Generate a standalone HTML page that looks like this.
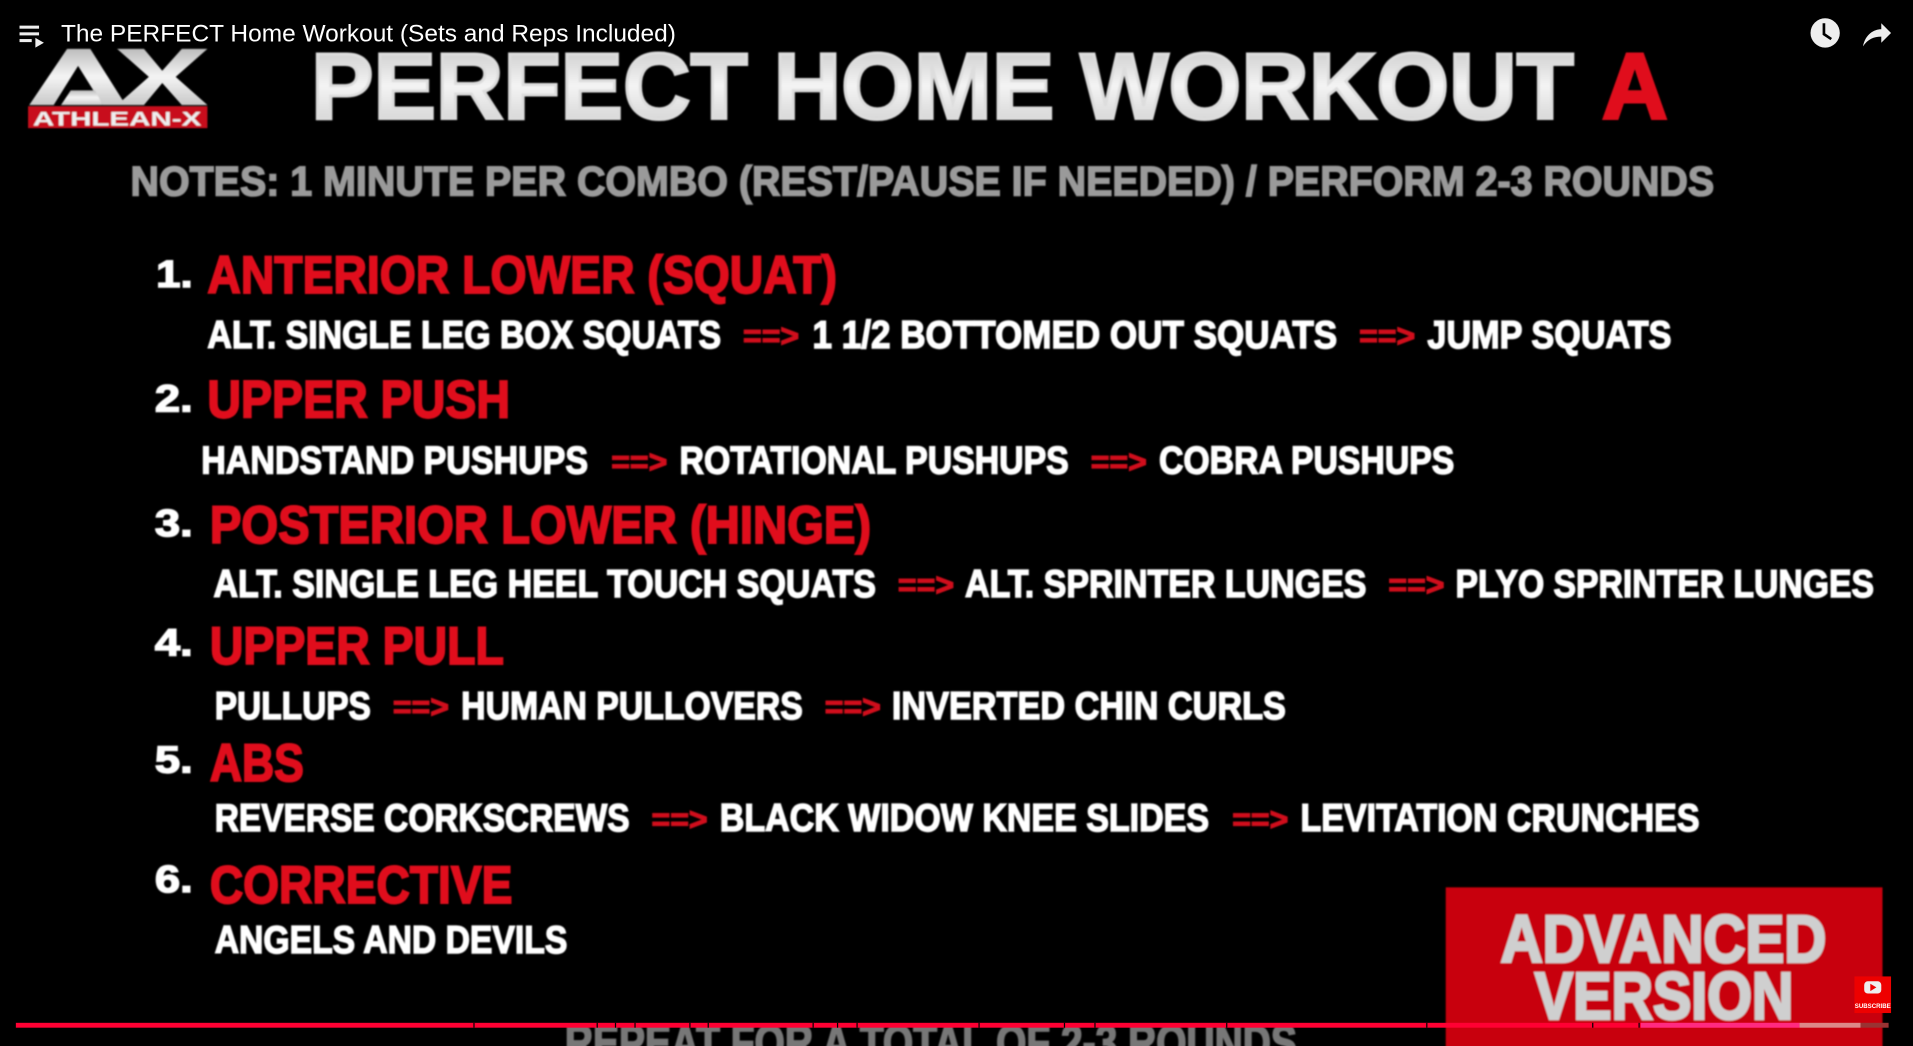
<!DOCTYPE html>
<html><head><meta charset="utf-8"><style>
html,body{margin:0;padding:0;background:#000;width:1913px;height:1046px;overflow:hidden}
svg{display:block}
text{font-family:"Liberation Sans",Arial,sans-serif;font-weight:700}
.t{font-weight:400}
</style></head><body>
<svg width="1913" height="1046" viewBox="0 0 1568 857" preserveAspectRatio="none" xmlns="http://www.w3.org/2000/svg">
<defs>
<linearGradient id="g" x1="0" y1="0" x2="0" y2="1"><stop offset="0" stop-color="#bdbdbd"/><stop offset="0.5" stop-color="#f4f4f4"/><stop offset="1" stop-color="#c8c8c8"/></linearGradient>
<filter id="b"><feGaussianBlur stdDeviation="0.7"/></filter>
</defs>
<rect width="1568" height="857" fill="#000"/>
<g filter="url(#b)">
<path d="M24 86 L55 40 L74 40 L103 86 L84 86 L64 54 L44 86 Z" fill="url(#g)"/>
<path d="M50 86 L58 74 L78 74 L84 86 Z" fill="url(#g)"/>
<path d="M96 40 L118 40 L133 58 L149 40 L170 40 L144 63 L170 86 L149 86 L133 68 L118 86 L96 86 L122 63 Z" fill="url(#g)"/>
<rect x="23" y="87" width="147" height="18" fill="#c8101a"/>
<text x="96" y="103" font-size="16" font-weight="bold" fill="#eee" text-anchor="middle" textLength="138" lengthAdjust="spacingAndGlyphs">ATHLEAN-X</text>
</g>
<g fill="#eee"><rect x="16" y="21" width="16" height="2.5"/><rect x="16" y="26.5" width="16" height="2.5"/><rect x="16" y="32" width="10" height="2.5"/><path d="M29 31 L36 35 L29 39 Z"/></g>
<text class="t" x="50" y="34" font-size="20" fill="#fff" textLength="504" lengthAdjust="spacingAndGlyphs">The PERFECT Home Workout (Sets and Reps Included)</text>
<circle cx="1496" cy="27" r="12" fill="#eee"/><path d="M1495 19 L1495 28 L1501 32" stroke="#000" stroke-width="2.2" fill="none"/>
<path d="M1527 38 C1529 28 1536 24 1542 24 L1542 19 L1550 27 L1542 35 L1542 30 C1536 30 1531 32 1527 38 Z" fill="#eee"/>
<g filter="url(#b)" font-weight="bold">
<text x="255" y="97" font-size="77" fill="url(#g)" stroke="#ddd" stroke-width="2.5" textLength="1035" lengthAdjust="spacingAndGlyphs">PERFECT HOME WORKOUT</text>
<text x="1313" y="97" font-size="77" fill="#e0101a" stroke="#e0101a" stroke-width="2.5" textLength="54" lengthAdjust="spacingAndGlyphs">A</text>
<text x="107" y="160" font-size="34" fill="#9a9a9a" stroke="#9a9a9a" stroke-width="1.3" textLength="1298" lengthAdjust="spacingAndGlyphs">NOTES:  1 MINUTE PER COMBO (REST/PAUSE IF NEEDED) / PERFORM 2-3 ROUNDS</text>
<g fill="#fff" stroke="#fff" stroke-width="1.2" font-size="31">
<text x="128" y="235" textLength="30" lengthAdjust="spacingAndGlyphs">1.</text>
<text x="127" y="337" textLength="31" lengthAdjust="spacingAndGlyphs">2.</text>
<text x="127" y="439" textLength="31" lengthAdjust="spacingAndGlyphs">3.</text>
<text x="127" y="537" textLength="31" lengthAdjust="spacingAndGlyphs">4.</text>
<text x="127" y="633" textLength="31" lengthAdjust="spacingAndGlyphs">5.</text>
<text x="127" y="731" textLength="31" lengthAdjust="spacingAndGlyphs">6.</text>
</g>
<g fill="#e0101a" stroke="#e0101a" stroke-width="1.6" font-size="43">
<text x="170" y="240" textLength="516" lengthAdjust="spacingAndGlyphs">ANTERIOR LOWER (SQUAT)</text>
<text x="170" y="342" textLength="248" lengthAdjust="spacingAndGlyphs">UPPER PUSH</text>
<text x="172" y="445" textLength="542" lengthAdjust="spacingAndGlyphs">POSTERIOR LOWER (HINGE)</text>
<text x="172" y="544" textLength="241" lengthAdjust="spacingAndGlyphs">UPPER PULL</text>
<text x="172" y="640" textLength="77" lengthAdjust="spacingAndGlyphs">ABS</text>
<text x="172" y="740" textLength="248" lengthAdjust="spacingAndGlyphs">CORRECTIVE</text>
</g>
<g fill="#fff" stroke="#fff" stroke-width="1.2" font-size="32">
<text x="170" y="285" textLength="421" lengthAdjust="spacingAndGlyphs">ALT. SINGLE LEG BOX SQUATS</text>
<text x="666" y="285" textLength="430" lengthAdjust="spacingAndGlyphs">1 1/2 BOTTOMED OUT SQUATS</text>
<text x="1170" y="285" textLength="200" lengthAdjust="spacingAndGlyphs">JUMP SQUATS</text>
<text x="165" y="388" textLength="317" lengthAdjust="spacingAndGlyphs">HANDSTAND PUSHUPS</text>
<text x="557" y="388" textLength="319" lengthAdjust="spacingAndGlyphs">ROTATIONAL PUSHUPS</text>
<text x="950" y="388" textLength="242" lengthAdjust="spacingAndGlyphs">COBRA PUSHUPS</text>
<text x="175" y="489" textLength="543" lengthAdjust="spacingAndGlyphs">ALT. SINGLE LEG HEEL TOUCH SQUATS</text>
<text x="791" y="489" textLength="329" lengthAdjust="spacingAndGlyphs">ALT. SPRINTER LUNGES</text>
<text x="1193" y="489" textLength="343" lengthAdjust="spacingAndGlyphs">PLYO SPRINTER LUNGES</text>
<text x="176" y="589" textLength="128" lengthAdjust="spacingAndGlyphs">PULLUPS</text>
<text x="378" y="589" textLength="280" lengthAdjust="spacingAndGlyphs">HUMAN PULLOVERS</text>
<text x="731" y="589" textLength="323" lengthAdjust="spacingAndGlyphs">INVERTED CHIN CURLS</text>
<text x="176" y="681" textLength="340" lengthAdjust="spacingAndGlyphs">REVERSE CORKSCREWS</text>
<text x="590" y="681" textLength="401" lengthAdjust="spacingAndGlyphs">BLACK WIDOW KNEE SLIDES</text>
<text x="1066" y="681" textLength="327" lengthAdjust="spacingAndGlyphs">LEVITATION CRUNCHES</text>
<text x="176" y="781" textLength="289" lengthAdjust="spacingAndGlyphs">ANGELS AND DEVILS</text>
</g>
<g fill="#d0101a" stroke="#d0101a" stroke-width="1" font-size="26">
<text x="609" y="284" textLength="46" lengthAdjust="spacingAndGlyphs">==&gt;</text>
<text x="1114" y="284" textLength="46" lengthAdjust="spacingAndGlyphs">==&gt;</text>
<text x="501" y="387" textLength="46" lengthAdjust="spacingAndGlyphs">==&gt;</text>
<text x="894" y="387" textLength="46" lengthAdjust="spacingAndGlyphs">==&gt;</text>
<text x="736" y="488" textLength="46" lengthAdjust="spacingAndGlyphs">==&gt;</text>
<text x="1138" y="488" textLength="46" lengthAdjust="spacingAndGlyphs">==&gt;</text>
<text x="322" y="588" textLength="46" lengthAdjust="spacingAndGlyphs">==&gt;</text>
<text x="676" y="588" textLength="46" lengthAdjust="spacingAndGlyphs">==&gt;</text>
<text x="534" y="680" textLength="46" lengthAdjust="spacingAndGlyphs">==&gt;</text>
<text x="1010" y="680" textLength="46" lengthAdjust="spacingAndGlyphs">==&gt;</text>
</g>
<rect x="1185" y="727" width="358" height="135" fill="#c80008"/>
<text x="1230" y="788" font-size="55" fill="#cfcfcf" stroke="#cfcfcf" stroke-width="2" textLength="267" lengthAdjust="spacingAndGlyphs">ADVANCED</text>
<text x="1258" y="835" font-size="55" fill="#cfcfcf" stroke="#cfcfcf" stroke-width="2" textLength="212" lengthAdjust="spacingAndGlyphs">VERSION</text>
<text x="463" y="868" font-size="40" fill="#777" stroke="#777" stroke-width="1.5" textLength="600" lengthAdjust="spacingAndGlyphs">REPEAT FOR A TOTAL OF 2-3 ROUNDS</text>
</g>
<rect x="1520" y="800" width="30" height="30" fill="#e00"/>
<rect x="1528" y="804" width="14" height="10" rx="3" fill="#eee"/><path d="M1533 806 L1538 809 L1533 812 Z" fill="#e00"/>
<text x="1535" y="826" font-size="5" fill="#fff" text-anchor="middle">SUBSCRIBE</text>
<rect x="13" y="838" width="1462" height="4" fill="#ff0033"/>
<rect x="1345" y="838" width="130" height="4" fill="#ff2a80"/>
<rect x="1475" y="838" width="50" height="4" fill="#d88"/>
<rect x="1525" y="838" width="23" height="4" fill="#933"/>
<g fill="#000"><rect x="388" y="838" width="1" height="4"/><rect x="489" y="838" width="1" height="4"/><rect x="504" y="838" width="1" height="4"/><rect x="520" y="838" width="1" height="4"/><rect x="565" y="838" width="1" height="4"/><rect x="580" y="838" width="1" height="4"/><rect x="666" y="838" width="1" height="4"/><rect x="686" y="838" width="1" height="4"/><rect x="702" y="838" width="1" height="4"/><rect x="802" y="838" width="1" height="4"/><rect x="872" y="838" width="1" height="4"/><rect x="897" y="838" width="1" height="4"/><rect x="1005" y="838" width="1" height="4"/><rect x="1169" y="838" width="1" height="4"/><rect x="1305" y="838" width="1" height="4"/><rect x="1343" y="838" width="1" height="4"/></g>
</svg>
</body></html>
